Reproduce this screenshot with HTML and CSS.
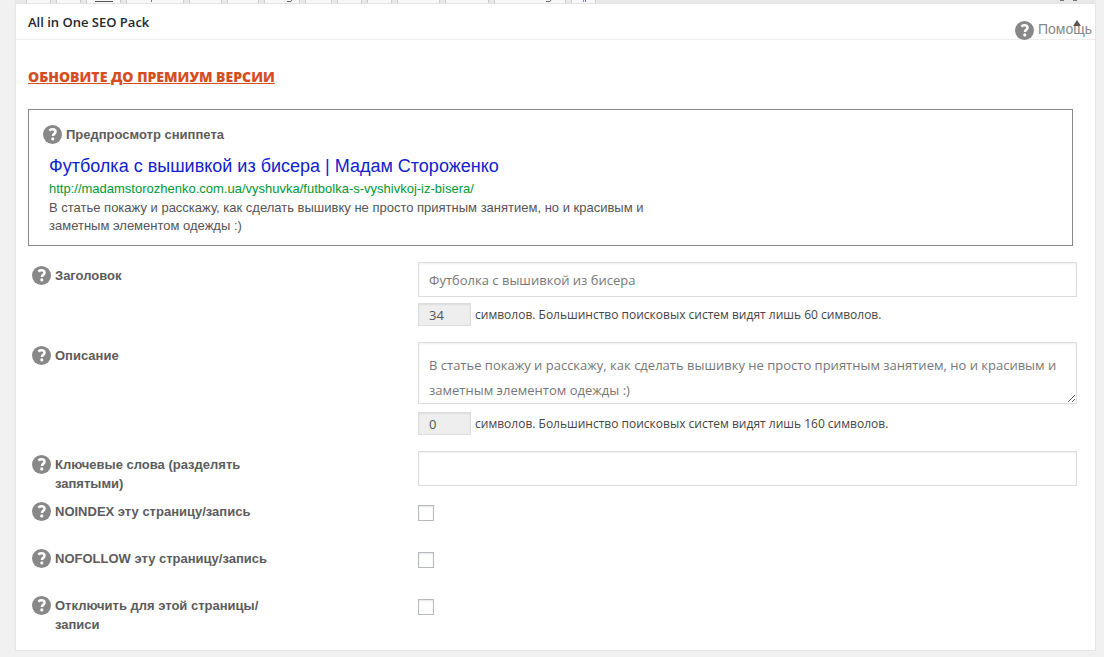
FILE: index.html
```html
<!DOCTYPE html>
<html lang="ru">
<head>
<meta charset="utf-8">
<title>All in One SEO Pack</title>
<link rel="stylesheet" href="styles.css">
</head>
<body>
<svg class="defs" aria-hidden="true">
  <symbol id="help" viewBox="0 0 19 19">
    <circle cx="9.5" cy="9.5" r="9.5" fill="#888"/>
    <path d="M6.3 5.4Q7.8 4.3 9.6 4.3Q12.5 4.3 12.5 6.7Q12.5 8 11.2 8.9Q10 9.7 10 11" fill="none" stroke="#fff" stroke-width="2.5"/>
    <circle cx="9.8" cy="13.9" r="1.6" fill="#fff"/>
  </symbol>
</svg>
<div class="toolbar" aria-hidden="true">
  <i class="tool"></i>
  <i class="tool"></i>
  <i class="tool w35"><svg width="33" height="3"><path d="M8 1.5h18" stroke="#555"/></svg></i>
  <i class="tool w58"><svg width="56" height="3"><path d="M24.5 0v2" stroke="#777"/></svg></i>
  <i class="tool w33"></i>
  <i class="tool w32"></i>
  <i class="tool w36"><svg width="34" height="3"><path d="M22 1.5h4l1-1.5" stroke="#666" fill="none"/></svg></i>
  <i class="tool w27"></i>
  <i class="tool"></i>
  <i class="tool"></i>
  <i class="tool w43"></i>
  <i class="tool w44"></i>
  <i class="tool w72"><svg width="70" height="3"><path d="M51 1.5h4l1-1.5" stroke="#666" fill="none"/></svg></i>
  <i class="tool"><svg width="23" height="3"><path d="M11.5 0v2" stroke="#5aa0c8"/><path d="M13.5 0v2" stroke="#8a5aa8"/></svg></i>
  <svg class="status" width="28" height="3"><path d="M0 .5h4M13 .5h4" stroke="#777"/></svg>
</div>
<main class="panel">
  <header class="panel-head">
    <h2>All in One SEO Pack</h2>
    <a class="help-link" href="#"><svg class="icon"><use href="#help"/></svg>Помощь</a>
    <button class="toggle" type="button" aria-label="Свернуть"></button>
  </header>
  <div class="inside">
    <a class="upgrade" href="#">ОБНОВИТЕ ДО ПРЕМИУМ ВЕРСИИ</a>
    <section class="snippet">
      <h3 class="label"><svg class="icon"><use href="#help"/></svg>Предпросмотр сниппета</h3>
      <div class="result">
        <a class="result-title" href="#">Футболка с вышивкой из бисера | Мадам Стороженко</a>
        <div class="result-url">http://madamstorozhenko.com.ua/vyshuvka/futbolka-s-vyshivkoj-iz-bisera/</div>
        <p class="result-text">В статье покажу и расскажу, как сделать вышивку не просто приятным занятием, но и красивым и заметным элементом одежды :)</p>
      </div>
    </section>
    <form class="fields">
      <div class="row">
        <label class="label" for="title"><svg class="icon"><use href="#help"/></svg>Заголовок</label>
        <div class="control">
          <input class="text" id="title" type="text" placeholder="Футболка с вышивкой из бисера">
          <div class="count"><input id="tc" type="text" value="34" readonly><label for="tc">символов. Большинство поисковых систем видят лишь 60 символов.</label></div>
        </div>
      </div>
      <div class="row">
        <label class="label" for="desc"><svg class="icon"><use href="#help"/></svg>Описание</label>
        <div class="control control-area">
          <textarea id="desc" placeholder="В статье покажу и расскажу, как сделать вышивку не просто приятным занятием, но и красивым и заметным элементом одежды :)"></textarea>
          <div class="count"><input id="dc" type="text" value="0" readonly><label for="dc">символов. Большинство поисковых систем видят лишь 160 символов.</label></div>
        </div>
      </div>
      <div class="row row-short">
        <label class="label" for="keys"><svg class="icon"><use href="#help"/></svg>Ключевые слова (разделять запятыми)</label>
        <div class="control"><input class="text" id="keys" type="text"></div>
      </div>
      <div class="row row-short">
        <label class="label" for="noindex"><svg class="icon"><use href="#help"/></svg>NOINDEX эту страницу/запись</label>
        <input class="check" id="noindex" type="checkbox">
      </div>
      <div class="row row-short">
        <label class="label" for="nofollow"><svg class="icon"><use href="#help"/></svg>NOFOLLOW эту страницу/запись</label>
        <input class="check" id="nofollow" type="checkbox">
      </div>
      <div class="row row-short">
        <label class="label" for="off"><svg class="icon"><use href="#help"/></svg><span>Отключить для этой страницы/<wbr>записи</span></label>
        <input class="check" id="off" type="checkbox">
      </div>
    </form>
  </div>
</main>
</body>
</html>
```
FILE: styles.css
```css
* { box-sizing: border-box; }
body {
  margin: 0;
  background: #f1f1f1;
  color: #444;
  font: 13px/19px "Open Sans", "Noto Sans", sans-serif;
}
.defs { display: none; }
.toolbar {
  display: flex;
  gap: 5px;
  height: 3px;
  margin: 0 8px 0 15px;
  padding: 0 8px 0 11px;
  overflow: hidden;
  background: #e8e8e8;
}
.tool {
  width: 25px;
  height: 3px;
  border: solid #ccc;
  border-width: 0 1px;
  background: #f7f7f7;
}
.tool svg, .status { display: block; }
.status { margin-left: auto; }
.w27 { width: 27px; }
.w32 { width: 32px; }
.w33 { width: 33px; }
.w35 { width: 35px; }
.w36 { width: 36px; }
.w43 { width: 43px; }
.w44 { width: 44px; }
.w58 { width: 58px; }
.w72 { width: 72px; }

.panel {
  margin: 0 8px 0 15px;
  border: 1px solid #e5e5e5;
  background: #fff;
  box-shadow: 0 1px 1px rgba(0, 0, 0, .04);
}
.panel-head {
  position: relative;
  height: 36px;
  padding: 8px 12px;
  border-bottom: 1px solid #eee;
}
h2 {
  margin: 0;
  color: #23282d;
  font-size: 13px;
  font-weight: 600;
  line-height: 20px;
}
.help-link {
  position: absolute;
  top: 17px;
  right: 3px;
  display: flex;
  gap: 4px;
  color: #888;
  font: 14px/17px "Liberation Sans", Arial, sans-serif;
  text-decoration: none;
}
.toggle {
  position: absolute;
  top: 16px;
  right: 14px;
  padding: 0;
  border: 4px solid transparent;
  border-top: 0;
  border-bottom: 6px solid #555;
  background: none;
}
.icon {
  flex: none;
  width: 19px;
  height: 19px;
}
.inside { padding: 27px 18px 11px 12px; }
.upgrade {
  display: block;
  color: #d54e21;
  font-size: 14px;
  font-weight: 800;
  line-height: 19px;
}
.snippet {
  margin: 23px 4px 16px 0;
  padding: 15px 14px 10px;
  border: 1px solid #888;
}
.label {
  display: flex;
  gap: 4px;
  margin: 0;
  color: #5c5c5c;
  font: bold 13px/19px "Liberation Sans", Arial, sans-serif;
}
.result {
  max-width: 620px;
  padding: 11px 6px 0;
  font: 13px/18px "Liberation Sans", Arial, sans-serif;
}
.result-title {
  display: block;
  color: #12c;
  font-size: 18px;
  line-height: 22px;
  text-decoration: none;
}
.result-url {
  margin: 3px 0 1px;
  color: #093;
}
.result-text { margin: 0; color: #555; }

.fields { padding-left: 4px; }
.row {
  display: grid;
  grid-template-columns: 37% 1fr;
  align-items: start;
  margin-left: -1px;
  padding-bottom: 16px;
}
.row-short { min-height: 47px; padding-bottom: 0; }
.row .label { max-width: 241px; padding: 4px 0 0 1px; }
.control { display: grid; gap: 6px; }
.control-area { gap: 8px; }
input, textarea {
  margin: 0;
  border: 1px solid #ddd;
  border-radius: 0;
  background: #fff;
  box-shadow: inset 0 1px 2px rgba(0, 0, 0, .07);
  color: #32373c;
  font: 13px/25px "Open Sans", "Noto Sans", sans-serif;
}
.text { width: 100%; height: 35px; padding: 0 10px; }
textarea {
  display: block;
  width: 100%;
  height: 62px;
  padding: 10px 10px 0;
  overflow: hidden;
  resize: vertical;
}
::placeholder { color: #777; opacity: 1; }
.count {
  display: flex;
  gap: 4px;
  align-items: center;
  font-size: 12px;
}
.count input {
  width: 53px;
  height: 23px;
  padding: 0 10px;
  background: #eee;
  color: #555;
  line-height: 20px;
}
.check {
  appearance: none;
  width: 16px;
  height: 16px;
  margin-top: 7px;
  border-color: #b4b9be;
  box-shadow: inset 0 1px 2px rgba(0, 0, 0, .1);
}
```
